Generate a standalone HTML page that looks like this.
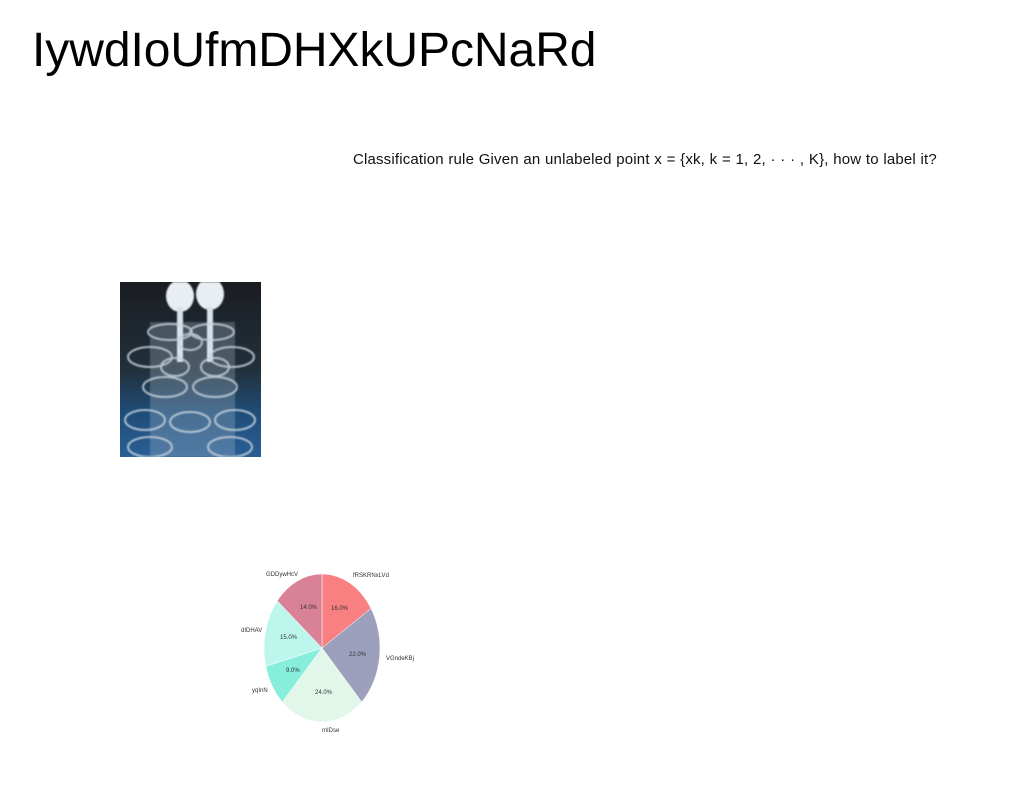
<!DOCTYPE html>
<html><head><meta charset="utf-8"><style>
body{margin:0;width:1024px;height:788px;background:#fff;position:relative;overflow:hidden;font-family:"Liberation Sans",sans-serif}
h1{position:absolute;left:32px;top:23px;margin:0;font-weight:normal;font-size:48px;color:#000;letter-spacing:-0.05px}
.t{position:absolute;left:353px;top:151px;font-size:15px;color:#111;letter-spacing:0.17px;word-spacing:0.3px}
.img{position:absolute;left:120px;top:282px;width:141px;height:175px;overflow:hidden;background:linear-gradient(180deg,#1a1d22 0%,#22303a 50%,#1f4d7a 75%,#2a5e94 100%)}
.img svg{filter:blur(0.8px)}
</style></head><body>
<h1>IywdIoUfmDHXkUPcNaRd</h1>
<div class="t">Classification rule Given an unlabeled point x = {xk, k = 1, 2, · · · , K}, how to label it?</div>
<div class="img"><svg width="141" height="175" viewBox="0 0 141 175">
<rect x="30" y="40" width="85" height="135" fill="#a8bccc" opacity=".3"/>
<ellipse cx="60" cy="14" rx="14" ry="16" fill="#e8eef2"/><ellipse cx="90" cy="12" rx="14" ry="16" fill="#e8eef2"/>
<rect x="57" y="25" width="6" height="55" fill="#d8e2ea"/><rect x="87" y="25" width="6" height="55" fill="#d8e2ea"/>
<g fill="none" stroke="#c8d4de" stroke-width="2" opacity=".85">
<ellipse cx="50" cy="50" rx="22" ry="8"/><ellipse cx="92" cy="50" rx="22" ry="8"/>
<ellipse cx="30" cy="75" rx="22" ry="10"/><ellipse cx="112" cy="75" rx="22" ry="10"/>
<ellipse cx="70" cy="60" rx="12" ry="8"/><ellipse cx="55" cy="85" rx="14" ry="9"/><ellipse cx="95" cy="85" rx="14" ry="9"/>
<ellipse cx="45" cy="105" rx="22" ry="10"/><ellipse cx="95" cy="105" rx="22" ry="10"/>
<ellipse cx="25" cy="138" rx="20" ry="10"/><ellipse cx="70" cy="140" rx="20" ry="10"/><ellipse cx="115" cy="138" rx="20" ry="10"/>
<ellipse cx="30" cy="165" rx="22" ry="10"/><ellipse cx="110" cy="165" rx="22" ry="10"/>
</g>
</svg></div>
<svg style="position:absolute;left:0;top:0" width="1024" height="788">
<g stroke="#fff" stroke-width="0.5">
<path d="M322 648 L322 574 A58 74 0 0 1 371 608.4 Z" fill="#f88080"/>
<path d="M322 648 L371 608.4 A58 74 0 0 1 361.7 701.9 Z" fill="#9da0bd"/>
<path d="M322 648 L361.7 701.9 A58 74 0 0 1 282.3 701.9 Z" fill="#e1f7ea"/>
<path d="M322 648 L282.3 701.9 A58 74 0 0 1 265.8 666.4 Z" fill="#86eedb"/>
<path d="M322 648 L265.8 666.4 A58 74 0 0 1 277.3 600.8 Z" fill="#bdf7ec"/>
<path d="M322 648 L277.3 600.8 A58 74 0 0 1 322 574 Z" fill="#d98196"/>
</g>
<g font-family="Liberation Sans,sans-serif" font-size="6" fill="#333">
<text x="300" y="609">14.0%</text><text x="331" y="610">16.0%</text>
<text x="280" y="639">15.0%</text><text x="349" y="656">22.0%</text>
<text x="286" y="672">9.0%</text><text x="315" y="694">24.0%</text>
<text x="266" y="576">GDDywHcV</text><text x="353" y="577">fRSKRNxLVd</text>
<text x="241" y="632">dIDHAV</text><text x="386" y="660">VGndeKBj</text>
<text x="252" y="692">yqInN</text><text x="322" y="732">mIDse</text>
</g>
</svg>
</body></html>
